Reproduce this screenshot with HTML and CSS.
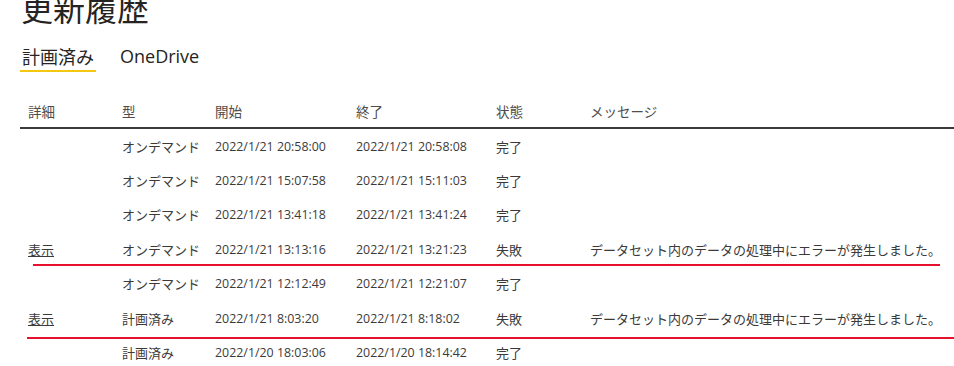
FILE: index.html
```html
<!DOCTYPE html>
<html lang="ja">
<head>
    <meta charset="UTF-8">
    <title>更新履歴</title>
    <link rel="stylesheet" href="styles.css">
</head>
<body>
<div id="page">
    <h1 class="title">更新履歴</h1>
    <ul class="tabs">
        <li class="selected">計画済み</li>
        <li>OneDrive</li>
    </ul>
    <div class="history">
        <table>
            <colgroup>
                <col class="c-detail"><col class="c-type"><col class="c-start"><col class="c-end"><col class="c-state"><col>
            </colgroup>
            <thead>
            <tr><th>詳細</th><th>型</th><th>開始</th><th>終了</th><th>状態</th><th>メッセージ</th></tr>
            </thead>
            <tbody>
            <tr><td></td><td>オンデマンド</td><td class="date">2022/1/21 20:58:00</td><td class="date">2022/1/21 20:58:08</td><td>完了</td><td></td></tr>
            <tr><td></td><td>オンデマンド</td><td class="date">2022/1/21 15:07:58</td><td class="date">2022/1/21 15:11:03</td><td>完了</td><td></td></tr>
            <tr><td></td><td>オンデマンド</td><td class="date">2022/1/21 13:41:18</td><td class="date">2022/1/21 13:41:24</td><td>完了</td><td></td></tr>
            <tr><td><a href="#">表示</a></td><td>オンデマンド</td><td class="date">2022/1/21 13:13:16</td><td class="date">2022/1/21 13:21:23</td><td>失敗</td><td>データセット内のデータの処理中にエラーが発生しました。</td></tr>
            <tr><td></td><td>オンデマンド</td><td class="date">2022/1/21 12:12:49</td><td class="date">2022/1/21 12:21:07</td><td>完了</td><td></td></tr>
            <tr><td><a href="#">表示</a></td><td>計画済み</td><td class="date">2022/1/21 8:03:20</td><td class="date">2022/1/21 8:18:02</td><td>失敗</td><td>データセット内のデータの処理中にエラーが発生しました。</td></tr>
            <tr><td></td><td>計画済み</td><td class="date">2022/1/20 18:03:06</td><td class="date">2022/1/20 18:14:42</td><td>完了</td><td></td></tr>
            </tbody>
        </table>
        <!-- 赤線：失敗した行のマーク -->
        <div class="mark mark1"></div>
        <div class="mark mark2"></div>
    </div>
</div>
</body>
</html>
```

FILE: styles.css
```css
*{
    margin: 0;
    padding: 0;
}
li{
    list-style: none;
}
a{
    color: inherit;
}
body{
    background: #fff;
    font-family: "Open Sans", "Noto Sans CJK JP", sans-serif;
    color: #252423;
    overflow: hidden;
}
#page{
    padding-left: 20px;
}
.title{
    font-family: "Noto Sans CJK JP", sans-serif;
    font-weight: normal;
    font-size: 32px;
    line-height: 32px;
    margin-top: -9px;
    padding-left: 1px;
}
.tabs{
    display: flex;
    gap: 22px;
    margin-top: 22px;
    font-size: 18px;
    line-height: 22px;
}
.tabs li{
    padding: 0 2px 3px 2px;
    border-bottom: 2px solid transparent;
}
.tabs .selected{
    border-bottom-color: #f2c811;
    font-family: "Noto Sans CJK JP", sans-serif;
}
.history{
    position: relative;
    margin-top: 22px;
}
table{
    width: 100%;
    border-collapse: collapse;
    table-layout: fixed;
}
.c-detail{ width: 94px; }
.c-type{ width: 93px; }
.c-start{ width: 141px; }
.c-end{ width: 140px; }
.c-state{ width: 94px; }
th, td{
    text-align: left;
    padding-left: 8px;
    white-space: nowrap;
    font-weight: normal;
    font-family: "Noto Sans CJK JP", sans-serif;
}
th{
    height: 33px;
    font-size: 13.5px;
    color: #4f4d4b;
    border-bottom: 2px solid #3b3a39;
}
td{
    height: 34.4px;
    font-size: 13px;
    color: #3b3a39;
}
td.date{
    font-family: "Open Sans", sans-serif;
    font-size: 12.4px;
}
.mark{
    position: absolute;
    height: 2px;
    background: #e8112d;
}
.mark1{
    left: 13px;
    width: 907px;
    top: 170px;
}
.mark2{
    left: 7px;
    right: -20px;
    top: 243px;
}
```
